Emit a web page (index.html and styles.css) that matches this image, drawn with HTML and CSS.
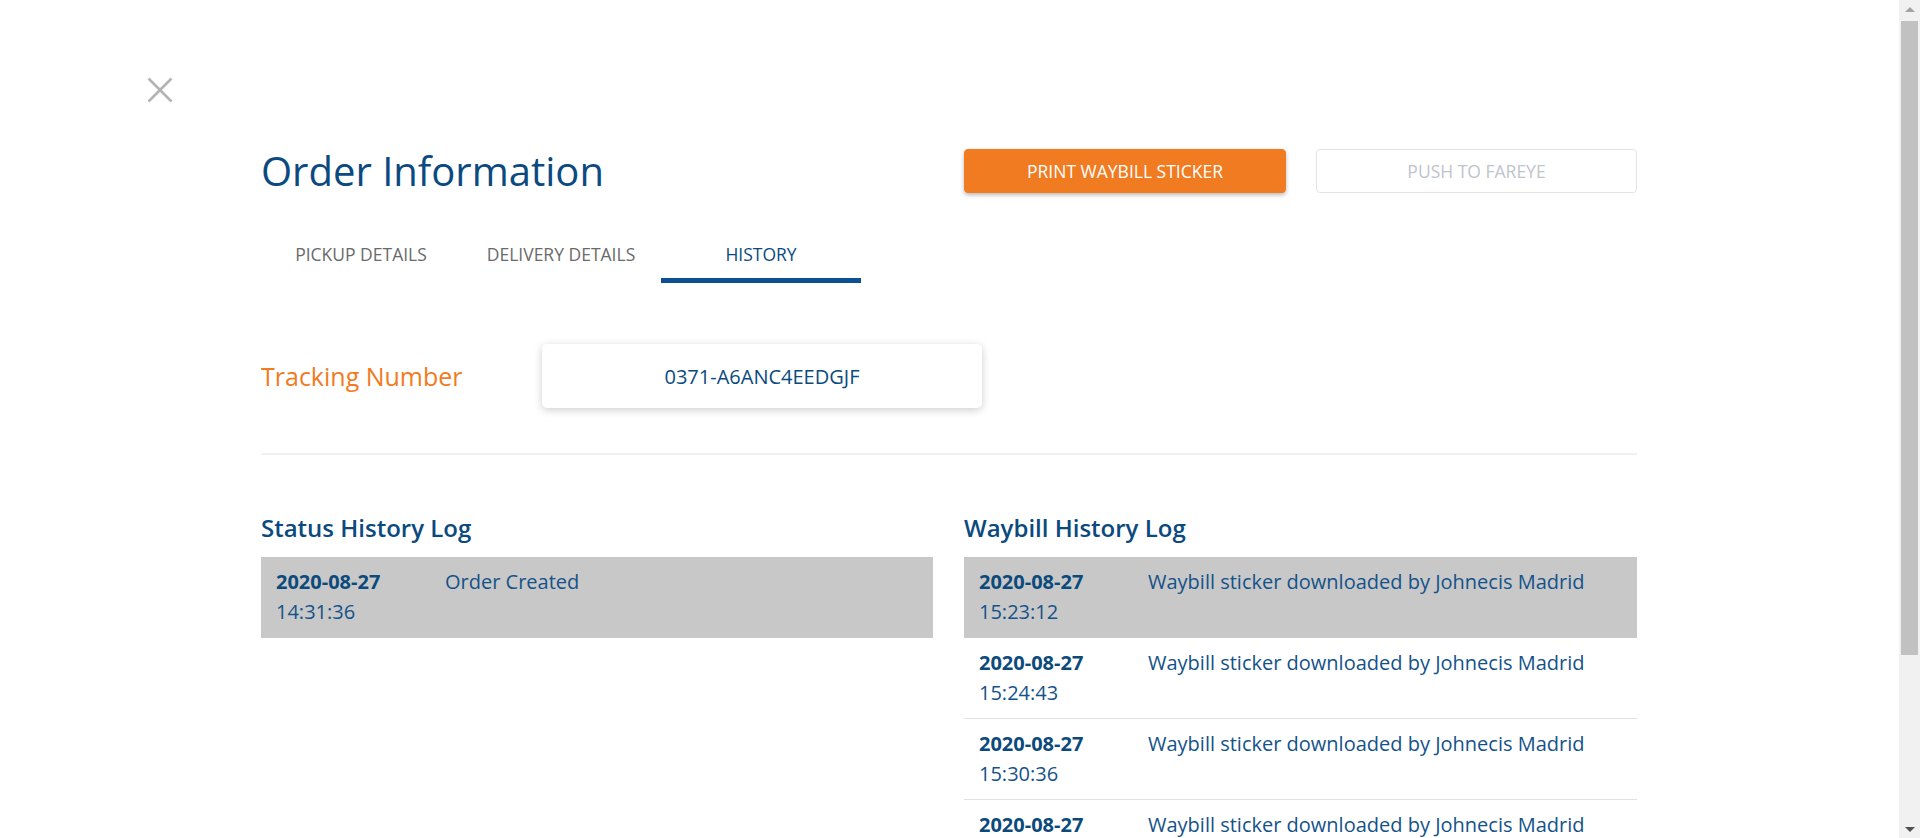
FILE: index.html
```html
<!DOCTYPE html>
<html lang="en">
<head>
<meta charset="utf-8">
<title>Order Information</title>
<link rel="stylesheet" href="styles.css">
</head>
<body>
<div class="page">
  <button class="close" aria-label="Close">
    <svg width="26" height="26" viewBox="0 0 26 26"><path d="M1.5 1.5 L24.5 24.5 M24.5 1.5 L1.5 24.5" stroke="#b4b4b4" stroke-width="2.6" fill="none"/></svg>
  </button>
  <div class="container">
    <div class="header">
      <h1 class="title">Order Information</h1>
      <div class="actions">
        <button class="btn btn-primary">PRINT WAYBILL STICKER</button>
        <button class="btn btn-disabled">PUSH TO FAREYE</button>
      </div>
    </div>
    <div class="tabs">
      <div class="tab">PICKUP DETAILS</div>
      <div class="tab">DELIVERY DETAILS</div>
      <div class="tab active">HISTORY</div>
    </div>
    <div class="tracking">
      <div class="tracking-label">Tracking Number</div>
      <div class="tracking-box">0371-A6ANC4EEDGJF</div>
    </div>
    <div class="divider"></div>
    <div class="logs">
      <section class="log">
        <h2 class="log-title">Status History Log</h2>
        <div class="row highlight">
          <div class="when"><div class="date">2020-08-27</div><div class="time">14:31:36</div></div>
          <div class="what">Order Created</div>
        </div>
      </section>
      <section class="log">
        <h2 class="log-title">Waybill History Log</h2>
        <div class="row highlight">
          <div class="when"><div class="date">2020-08-27</div><div class="time">15:23:12</div></div>
          <div class="what">Waybill sticker downloaded by Johnecis Madrid</div>
        </div>
        <div class="row">
          <div class="when"><div class="date">2020-08-27</div><div class="time">15:24:43</div></div>
          <div class="what">Waybill sticker downloaded by Johnecis Madrid</div>
        </div>
        <div class="row">
          <div class="when"><div class="date">2020-08-27</div><div class="time">15:30:36</div></div>
          <div class="what">Waybill sticker downloaded by Johnecis Madrid</div>
        </div>
        <div class="row">
          <div class="when"><div class="date">2020-08-27</div><div class="time">15:42:05</div></div>
          <div class="what">Waybill sticker downloaded by Johnecis Madrid</div>
        </div>
        <div class="row">
          <div class="when"><div class="date">2020-08-27</div><div class="time">15:58:19</div></div>
          <div class="what">Waybill sticker downloaded by Johnecis Madrid</div>
        </div>
        <div class="row">
          <div class="when"><div class="date">2020-08-27</div><div class="time">16:03:51</div></div>
          <div class="what">Waybill sticker downloaded by Johnecis Madrid</div>
        </div>
      </section>
    </div>
  </div>
</div>
<div class="scrollbar" aria-hidden="true">
  <div class="sb-arrow sb-up"></div>
  <div class="sb-track"><div class="sb-thumb"></div></div>
  <div class="sb-arrow sb-down"></div>
</div>
</body>
</html>
```
FILE: styles.css
```css
* { box-sizing: border-box; }
html, body { margin: 0; padding: 0; background: #ffffff; }
body {
  font-family: "Open Sans", "Noto Sans", sans-serif;
  color: #0d4a7e;
}
.page {
  padding: 77px 0 20px 0;
}
.close {
  display: block;
  margin: 0 0 0 147px;
  padding: 0;
  width: 26px;
  height: 26px;
  border: 0;
  background: transparent;
}
.close svg { display: block; }
.container {
  margin-left: 261px;
  width: 1376px;
}
.header {
  margin-top: 41px;
  display: flex;
  justify-content: space-between;
  align-items: center;
  height: 54px;
}
.title {
  margin: 0;
  font-size: 40px;
  font-weight: 400;
  line-height: 54px;
  color: #0b4a80;
}
.actions {
  display: flex;
  gap: 30px;
}
.btn {
  width: 322px;
  height: 44px;
  border-radius: 4px;
  font-family: "Open Sans", sans-serif;
  font-size: 17.5px;
  padding: 0;
}
.btn-primary {
  background: #f07b21;
  border: 1px solid #f07b21;
  color: #ffffff;
  box-shadow: 0 2px 4px rgba(0, 0, 0, 0.28);
}
.btn-disabled {
  background: #ffffff;
  border: 1px solid #e2e4ea;
  color: #c0c4cc;
  width: 321px;
}
.tabs {
  display: flex;
  margin-top: 45px;
}
.tab {
  width: 200px;
  text-align: center;
  font-size: 17.5px;
  line-height: 22px;
  color: #6a6a6a;
  padding-bottom: 13px;
  border-bottom: 5px solid transparent;
}
.tab.active {
  color: #0b4a80;
  border-bottom-color: #0c5094;
}
.tracking {
  display: flex;
  align-items: center;
  margin-top: 61px;
}
.tracking-label {
  width: 281px;
  font-size: 25px;
  color: #f27b22;
  line-height: 32px;
}
.tracking-box {
  width: 440px;
  height: 64px;
  border-radius: 5px;
  background: #fff;
  box-shadow: 0 2px 8px rgba(0, 0, 0, 0.2);
  display: flex;
  align-items: center;
  justify-content: center;
  font-size: 20px;
  font-weight: 500;
  color: #0b4a7e;
}
.divider {
  margin-top: 45px;
  height: 2px;
  background: #f0f0f0;
}
.logs {
  display: grid;
  grid-template-columns: 672px 673px;
  column-gap: 31px;
  margin-top: 57px;
  align-items: start;
}
.log-title {
  margin: 0 0 13px 0;
  font-size: 24px;
  font-weight: 600;
  line-height: 32px;
  color: #0b4a7e;
}
.row {
  display: grid;
  grid-template-columns: 169px 1fr;
  padding: 10px 16px 10px 15px;
  height: 81px;
  border-bottom: 1px solid #e2e2e2;
  font-size: 20px;
  line-height: 30px;
}
.row.highlight {
  background: #c8c8c8;
  border-bottom-color: #c8c8c8;
}
.date {
  font-weight: 700;
  color: #0c4a7c;
}
.time, .what {
  color: #14528a;
}
.scrollbar {
  position: fixed;
  top: 0;
  right: 0;
  width: 21px;
  height: 100vh;
  background: #f1f1f1;
  display: flex;
  flex-direction: column;
}
.sb-arrow {
  height: 17px;
  position: relative;
}
.sb-arrow::after {
  content: "";
  position: absolute;
  left: 6px;
  border-left: 5px solid transparent;
  border-right: 5px solid transparent;
}
.sb-up::after {
  top: 7px;
  border-bottom: 5px solid #a3a3a3;
}
.sb-down::after {
  top: 6px;
  border-top: 5px solid #505050;
}
.sb-track {
  flex: 1;
  padding: 4px 2px 0 2px;
}
.sb-thumb {
  height: 634px;
  background: #c1c1c1;
}
```
